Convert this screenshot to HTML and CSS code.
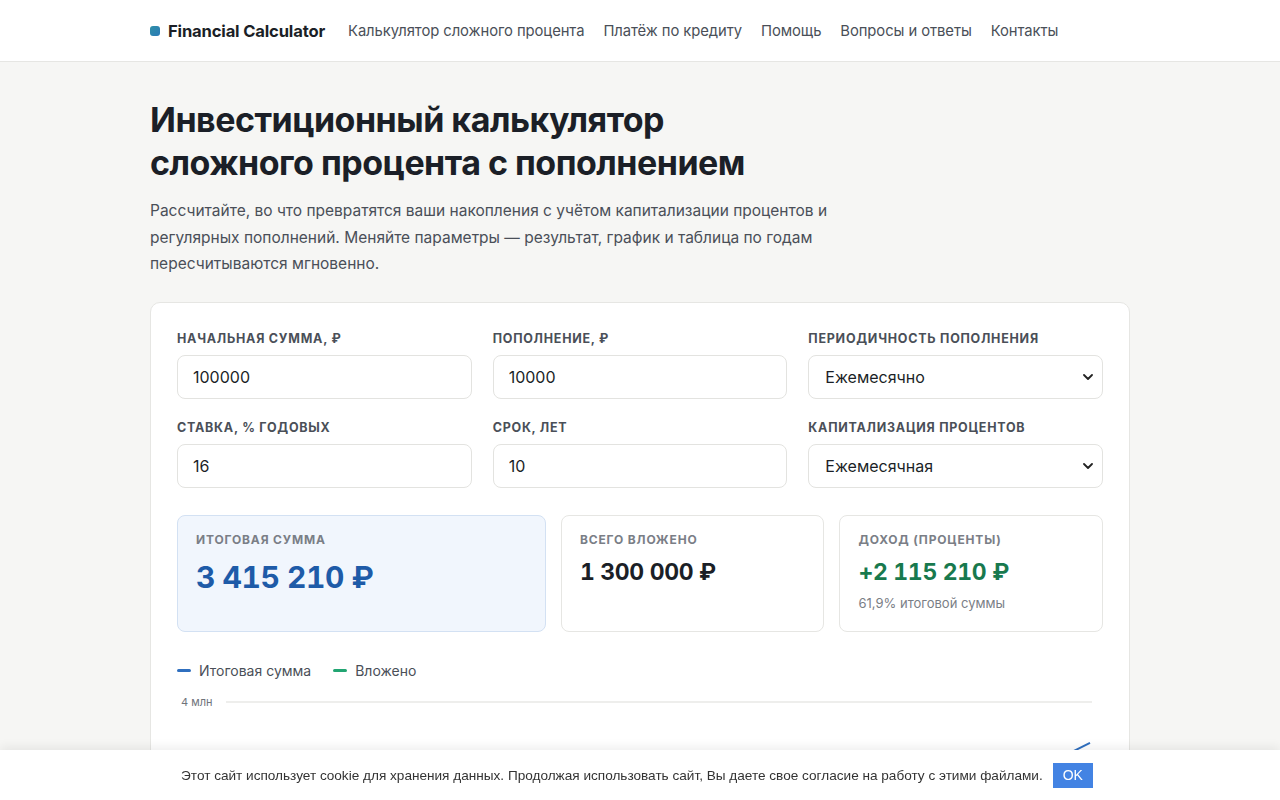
FILE: index.html
```html
<!DOCTYPE html>
<html lang="ru">
<head>
    <meta charset="UTF-8">
    <meta name="viewport" content="width=device-width, initial-scale=1.0">
    <title>Инвестиционный калькулятор сложного процента</title>
    <link rel="stylesheet" href="styles.css">
</head>
<body>
    <header class="site-header">
        <div class="container header-inner">
            <a class="logo" href="#"><span class="logo-mark"></span>Financial Calculator</a>
            <nav class="nav">
                <a href="#">Калькулятор сложного процента</a>
                <a href="#">Платёж по кредиту</a>
                <a href="#">Помощь</a>
                <a href="#">Вопросы и ответы</a>
                <a href="#">Контакты</a>
            </nav>
        </div>
    </header>

    <main class="container main">
        <h1 class="title">Инвестиционный калькулятор<br>сложного процента с пополнением</h1>
        <p class="lead">Рассчитайте, во что превратятся ваши накопления с учётом капитализации процентов и регулярных пополнений. Меняйте параметры — результат, график и таблица по годам пересчитываются мгновенно.</p>

        <section class="calc">
            <div class="fields">
                <div class="field">
                    <label>Начальная сумма, ₽</label>
                    <input class="control" type="text" value="100000">
                </div>
                <div class="field">
                    <label>Пополнение, ₽</label>
                    <input class="control" type="text" value="10000">
                </div>
                <div class="field">
                    <label>Периодичность пополнения</label>
                    <select class="control select">
                        <option>Ежемесячно</option>
                        <option>Ежеквартально</option>
                        <option>Ежегодно</option>
                    </select>
                </div>
                <div class="field">
                    <label>Ставка, % годовых</label>
                    <input class="control" type="text" value="16">
                </div>
                <div class="field">
                    <label>Срок, лет</label>
                    <input class="control" type="text" value="10">
                </div>
                <div class="field">
                    <label>Капитализация процентов</label>
                    <select class="control select">
                        <option>Ежемесячная</option>
                        <option>Ежеквартальная</option>
                        <option>Ежегодная</option>
                    </select>
                </div>
            </div>

            <div class="results">
                <div class="result result-main">
                    <div class="result-label">Итоговая сумма</div>
                    <div class="result-value">3 415 210 ₽</div>
                </div>
                <div class="result">
                    <div class="result-label">Всего вложено</div>
                    <div class="result-value">1 300 000 ₽</div>
                </div>
                <div class="result">
                    <div class="result-label">Доход (проценты)</div>
                    <div class="result-value green">+2 115 210 ₽</div>
                    <div class="result-note">61,9% итоговой суммы</div>
                </div>
            </div>

            <div class="legend">
                <span class="legend-item"><i class="swatch blue"></i>Итоговая сумма</span>
                <span class="legend-item"><i class="swatch green-bg"></i>Вложено</span>
            </div>

            <svg class="chart" viewBox="0 0 926 330" width="926" height="330">
                <g class="grid">
                    <line x1="49" y1="11" x2="915" y2="11"/>
                    <line x1="49" y1="81" x2="915" y2="81"/>
                    <line x1="49" y1="151" x2="915" y2="151"/>
                    <line x1="49" y1="221" x2="915" y2="221"/>
                    <line x1="49" y1="291" x2="915" y2="291"/>
                </g>
                <g class="axis">
                    <text x="4" y="15">4 млн</text>
                    <text x="4" y="85">3 млн</text>
                    <text x="4" y="155">2 млн</text>
                    <text x="4" y="225">1 млн</text>
                    <text x="4" y="295">0</text>
                    <text x="57" y="315" text-anchor="middle">0</text>
                    <text x="228.6" y="315" text-anchor="middle">2</text>
                    <text x="400.2" y="315" text-anchor="middle">4</text>
                    <text x="571.8" y="315" text-anchor="middle">6</text>
                    <text x="743.4" y="315" text-anchor="middle">8</text>
                    <text x="913" y="315" text-anchor="middle">10</text>
                </g>
                <polyline class="line-invested" points="57,284 142.6,275.6 228.2,267.2 313.8,258.8 399.4,250.4 485,242 570.6,233.6 656.2,225.2 741.8,216.8 827.4,208.4 913,200"/>
                <polyline class="line-total" points="57,284 142.6,273.8 228.2,261.7 313.8,247.7 399.4,231.1 485,211.8 570.6,189.1 656.2,162.5 741.8,131.3 827.4,94.7 913,51.9"/>
            </svg>
        </section>
    </main>

    <div class="cookie">
        <span>Этот сайт использует cookie для хранения данных. Продолжая использовать сайт, Вы даете свое согласие на работу с этими файлами.</span>
        <button class="cookie-btn" type="button">OK</button>
    </div>
</body>
</html>
```

FILE: styles.css
```css
* {
    box-sizing: border-box;
}

body {
    margin: 0;
    background-color: #f6f6f4;
    color: #1b1f27;
    font-family: Inter, "Noto Sans", sans-serif;
}

a {
    text-decoration: none;
}

.container {
    width: 980px;
    margin: 0 auto;
}

.site-header {
    background-color: #fff;
    border-bottom: 1px solid #e6e6e3;
}

.header-inner {
    display: flex;
    align-items: center;
    height: 61px;
    gap: 23px;
}

.logo {
    display: flex;
    align-items: center;
    gap: 8px;
    font-size: 16.6px;
    font-weight: 700;
    color: #1b1f27;
    letter-spacing: -0.01em;
}

.logo-mark {
    width: 10px;
    height: 10px;
    border-radius: 3px;
    background: linear-gradient(135deg, #2f8fa6, #2a7ab8);
}

.nav {
    display: flex;
    gap: 19px;
}

.nav a {
    font-size: 14.8px;
    letter-spacing: -0.005em;
    color: #4a4f58;
}

.main {
    padding: 36px 0 120px;
}

.title {
    margin: 0;
    font-size: 34px;
    line-height: 43px;
    font-weight: 700;
    letter-spacing: -0.015em;
    color: #1b1f27;
}

.lead {
    width: 700px;
    margin: 14px 0 24px;
    font-size: 15.5px;
    line-height: 26.5px;
    color: #4a4f58;
}

.calc {
    background-color: #fff;
    border: 1px solid #e6e6e3;
    border-radius: 10px;
    padding: 28px 26px 20px;
}

.fields {
    display: grid;
    grid-template-columns: repeat(3, 1fr);
    column-gap: 21px;
    row-gap: 21px;
}

.field label {
    display: block;
    margin-bottom: 9px;
    font-size: 12.5px;
    font-weight: 700;
    letter-spacing: 0.06em;
    text-transform: uppercase;
    color: #4a4f58;
}

.control {
    display: block;
    width: 100%;
    height: 44px;
    padding: 0 15px;
    border: 1px solid #e3e3e0;
    border-radius: 8px;
    background-color: #fff;
    font-family: Inter, "Noto Sans", sans-serif;
    font-size: 16px;
    color: #1b1f27;
    outline: none;
}

.select {
    appearance: none;
    -webkit-appearance: none;
    padding-left: 16px;
    background-image: url("data:image/svg+xml,%3Csvg xmlns='http://www.w3.org/2000/svg' width='10' height='6' viewBox='0 0 10 6'%3E%3Cpath d='M1 1l4 4 4-4' fill='none' stroke='%23222' stroke-width='1.8' stroke-linecap='round' stroke-linejoin='round'/%3E%3C/svg%3E");
    background-repeat: no-repeat;
    background-position: right 9px center;
}

.results {
    display: grid;
    grid-template-columns: 1.4fr 1fr 1fr;
    gap: 15px;
    margin-top: 27px;
}

.result {
    height: 117px;
    padding: 16px 18px;
    border: 1px solid #e6e6e3;
    border-radius: 8px;
    background-color: #fff;
}

.result-main {
    background-color: #f1f6fd;
    border-color: #d3e1f3;
}

.result-label {
    font-size: 12px;
    font-weight: 700;
    letter-spacing: 0.07em;
    text-transform: uppercase;
    color: #7a7e86;
}

.result-value {
    margin-top: 11px;
    font-size: 23px;
    font-weight: 700;
    letter-spacing: -0.015em;
    font-variant-numeric: tabular-nums;
    color: #1b1f27;
}

.result-main .result-value {
    margin-top: 12px;
    font-size: 30px;
    color: #1e5ba8;
}

.result-value.green {
    color: #18794e;
}

.result-note {
    margin-top: 9px;
    font-size: 13px;
    color: #7a7e86;
}

.legend {
    display: flex;
    gap: 22px;
    margin-top: 30px;
}

.legend-item {
    display: flex;
    align-items: center;
    gap: 8px;
    font-size: 14px;
    color: #4a4f58;
}

.swatch {
    width: 14px;
    height: 3px;
    border-radius: 2px;
}

.swatch.blue {
    background-color: #2f6fbf;
}

.swatch.green-bg {
    background-color: #22a572;
}

.chart {
    display: block;
    margin-top: 12px;
}

.grid line {
    stroke: #e8e8e6;
    stroke-width: 1.5;
}

.axis text {
    font-family: Inter, "Noto Sans", sans-serif;
    font-size: 11px;
    fill: #6f737b;
}

.line-total {
    fill: none;
    stroke: #2f6fbf;
    stroke-width: 2;
}

.line-invested {
    fill: none;
    stroke: #22a572;
    stroke-width: 2;
}

.cookie {
    position: fixed;
    left: 0;
    right: 0;
    bottom: 0;
    height: 50px;
    display: flex;
    align-items: center;
    justify-content: center;
    gap: 10px;
    padding-right: 6px;
    background-color: #fff;
    box-shadow: 0 -3px 10px rgba(0, 0, 0, 0.07);
    font-family: "Liberation Sans", Arial, sans-serif;
    font-size: 13.6px;
    color: #333;
}

.cookie-btn {
    height: 25px;
    padding: 0 10px;
    border: none;
    background-color: #4383e3;
    color: #fff;
    font-family: "Liberation Sans", Arial, sans-serif;
    font-size: 14px;
}
```
